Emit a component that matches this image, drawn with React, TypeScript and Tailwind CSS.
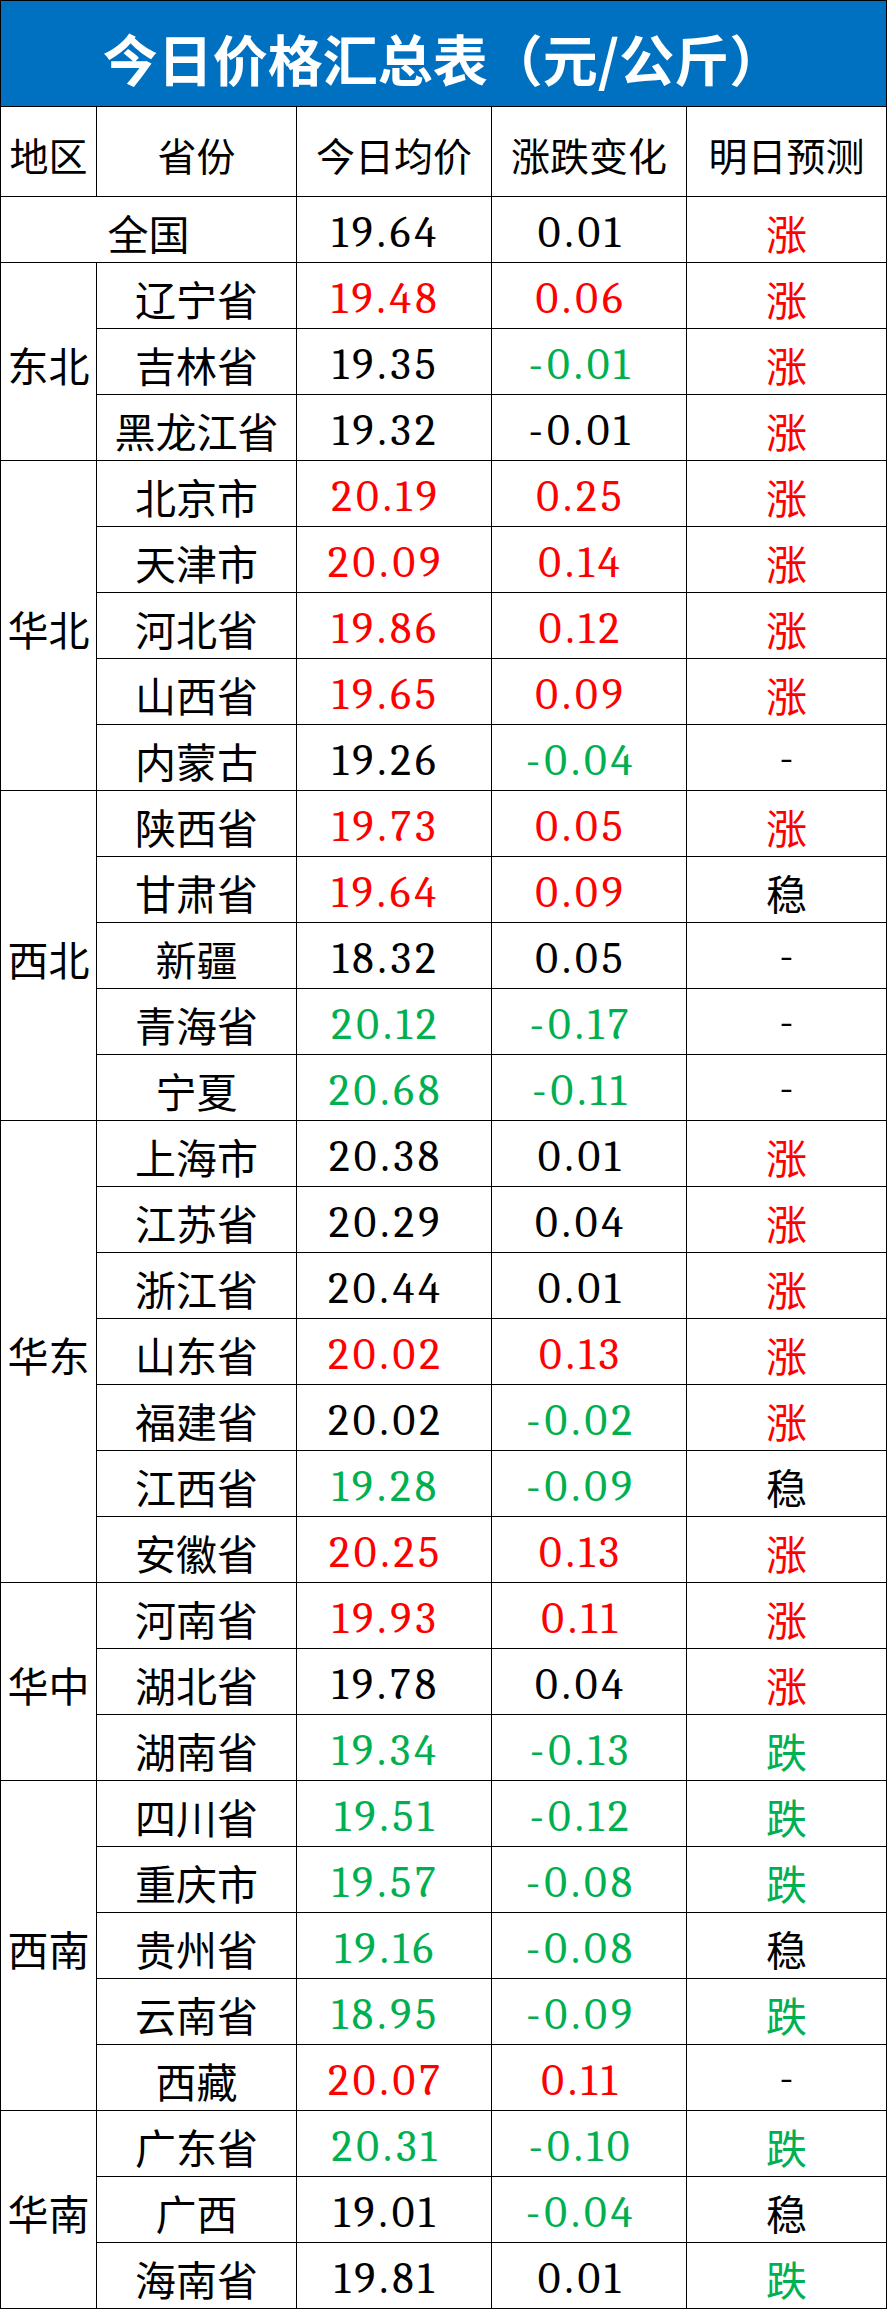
import React from "react";

type C = "k" | "r" | "g";
type Row = [string, string, C, string, C, string, C];

const groups: { region: string; rows: Row[] }[] = [
  {
    region: "东北",
    rows: [
      ["辽宁省", "19.48", "r", "0.06", "r", "涨", "r"],
      ["吉林省", "19.35", "k", "-0.01", "g", "涨", "r"],
      ["黑龙江省", "19.32", "k", "-0.01", "k", "涨", "r"],
    ],
  },
  {
    region: "华北",
    rows: [
      ["北京市", "20.19", "r", "0.25", "r", "涨", "r"],
      ["天津市", "20.09", "r", "0.14", "r", "涨", "r"],
      ["河北省", "19.86", "r", "0.12", "r", "涨", "r"],
      ["山西省", "19.65", "r", "0.09", "r", "涨", "r"],
      ["内蒙古", "19.26", "k", "-0.04", "g", "-", "k"],
    ],
  },
  {
    region: "西北",
    rows: [
      ["陕西省", "19.73", "r", "0.05", "r", "涨", "r"],
      ["甘肃省", "19.64", "r", "0.09", "r", "稳", "k"],
      ["新疆", "18.32", "k", "0.05", "k", "-", "k"],
      ["青海省", "20.12", "g", "-0.17", "g", "-", "k"],
      ["宁夏", "20.68", "g", "-0.11", "g", "-", "k"],
    ],
  },
  {
    region: "华东",
    rows: [
      ["上海市", "20.38", "k", "0.01", "k", "涨", "r"],
      ["江苏省", "20.29", "k", "0.04", "k", "涨", "r"],
      ["浙江省", "20.44", "k", "0.01", "k", "涨", "r"],
      ["山东省", "20.02", "r", "0.13", "r", "涨", "r"],
      ["福建省", "20.02", "k", "-0.02", "g", "涨", "r"],
      ["江西省", "19.28", "g", "-0.09", "g", "稳", "k"],
      ["安徽省", "20.25", "r", "0.13", "r", "涨", "r"],
    ],
  },
  {
    region: "华中",
    rows: [
      ["河南省", "19.93", "r", "0.11", "r", "涨", "r"],
      ["湖北省", "19.78", "k", "0.04", "k", "涨", "r"],
      ["湖南省", "19.34", "g", "-0.13", "g", "跌", "g"],
    ],
  },
  {
    region: "西南",
    rows: [
      ["四川省", "19.51", "g", "-0.12", "g", "跌", "g"],
      ["重庆市", "19.57", "g", "-0.08", "g", "跌", "g"],
      ["贵州省", "19.16", "g", "-0.08", "g", "稳", "k"],
      ["云南省", "18.95", "g", "-0.09", "g", "跌", "g"],
      ["西藏", "20.07", "r", "0.11", "r", "-", "k"],
    ],
  },
  {
    region: "华南",
    rows: [
      ["广东省", "20.31", "g", "-0.10", "g", "跌", "g"],
      ["广西", "19.01", "k", "-0.04", "g", "稳", "k"],
      ["海南省", "19.81", "k", "0.01", "k", "跌", "g"],
    ],
  },
];

const color = (c: C) =>
  c === "r" ? "text-[#ff0000]" : c === "g" ? "text-[#00b050]" : "text-black";

const cjk = "font-['Noto_Sans_CJK_SC',sans-serif]";

const spans: Record<number, string> = {
  3: "row-span-3",
  5: "row-span-5",
  7: "row-span-7",
};

function Cell({ className, children }: { className?: string; children: React.ReactNode }) {
  return (
    <div className={`bg-white flex items-center justify-center whitespace-nowrap ${className ?? ""}`}>
      {children}
    </div>
  );
}

function Num({ v, c }: { v: string; c: C }) {
  return (
    <Cell className={`text-[44px] pt-[6px] pr-[16px] ${color(c)}`}>
      <span className="font-serif tracking-[4px]">{v}</span>
    </Cell>
  );
}

function Forecast({ v, c }: { v: string; c: C }) {
  if (v === "-") {
    return (
      <Cell className={`text-[42px] pt-[2px] ${color(c)}`}>
        <span className="font-serif">-</span>
      </Cell>
    );
  }
  return <Cell className={`${cjk} text-[41px] pt-[6px] ${color(c)}`}>{v}</Cell>;
}

export default function App() {
  return (
    <div className="w-[887px] h-[2309px] bg-black p-[1px] pb-0 grid gap-[1px] grid-cols-[95px_199px_194px_194px_199px] grid-rows-[105px_89px_repeat(32,65px)]">
      <div className="col-span-5 bg-[#0070c0] flex items-center justify-center pt-[8px] text-white font-['Noto_Sans_CJK_SC',sans-serif] font-bold text-[55px] whitespace-nowrap">
        今日价格汇总表（元/公斤）
      </div>
      {["地区", "省份", "今日均价", "涨跌变化", "明日预测"].map((h) => (
        <Cell key={h} className={`${cjk} text-[39px] pt-[6px] text-black`}>
          {h}
        </Cell>
      ))}
      <Cell className={`col-span-2 ${cjk} text-[41px] pt-[6px] text-black`}>全国</Cell>
      <Num v="19.64" c="k" />
      <Num v="0.01" c="k" />
      <Forecast v="涨" c="r" />
      {groups.map((g) => (
        <React.Fragment key={g.region}>
          <Cell className={`${spans[g.rows.length]} ${cjk} text-[41px] pt-[6px] text-black`}>{g.region}</Cell>
          {g.rows.map((r) => (
            <React.Fragment key={r[0]}>
              <Cell className={`${cjk} text-[41px] pt-[6px] text-black`}>{r[0]}</Cell>
              <Num v={r[1]} c={r[2]} />
              <Num v={r[3]} c={r[4]} />
              <Forecast v={r[5]} c={r[6]} />
            </React.Fragment>
          ))}
        </React.Fragment>
      ))}
    </div>
  );
}
